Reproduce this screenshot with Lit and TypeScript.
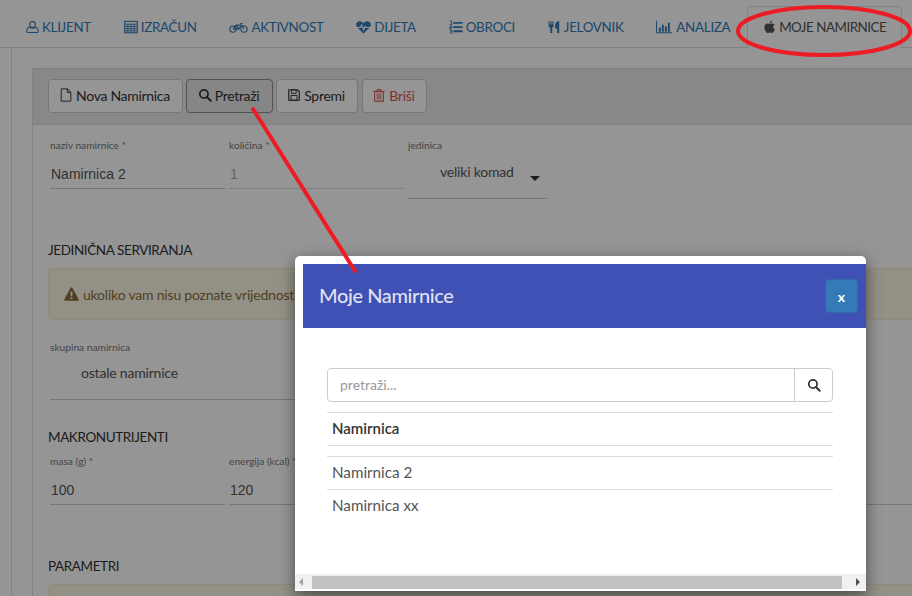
import { LitElement, css, html, svg } from 'lit';
import { customElement } from 'lit/decorators.js';

const icons: Record<string, unknown> = {
  user: svg`<circle cx="8" cy="5" r="3.6" fill="none" stroke="currentColor" stroke-width="1.3"/><path d="M2.2 14.8c-.8 0-1.2-.5-1.2-1.3 0-3 1-5 3.3-5.200 1 .8 2.300 1.200 3.700 1.200s2.700-.4 3.700-1.200c2.300.2 3.300 2.200 3.300 5.200 0 .8-.4 1.300-1.200 1.300z" fill="none" stroke="currentColor" stroke-width="1.300" stroke-linejoin="round"/>`,
  calc: svg`<rect x=".8" y="1.600" width="14.400" height="13" fill="none" stroke="currentColor" stroke-width="1.200"/><path d="M.8 4.800h14.400M.8 7.400h14.400M.8 9.900h14.400M.8 12.300h14.400M4.400 4.800v9.800M8 4.800v9.800M11.600 4.800v9.800" stroke="currentColor" stroke-width="1"/>`,
  bike: svg`<circle cx="4.200" cy="10.200" r="3.300" fill="none" stroke="currentColor" stroke-width="1.200"/><circle cx="15.800" cy="10.200" r="3.300" fill="none" stroke="currentColor" stroke-width="1.200"/><path d="M4.200 10.200 7.500 6h6l2.300 4.200M7.500 6l2.700 4.200h-6M10.200 10.200 13 5.500M12 4.300h2.300" fill="none" stroke="currentColor" stroke-width="1.200"/>`,
  heart: svg`<path d="M8 15 1.700 8.800C.6 7.700.2 6.700.2 5.400.2 3.200 1.800 1.800 4 1.800c1.600 0 3 .9 4 2.200 1-1.300 2.400-2.200 4-2.200 2.200 0 3.800 1.400 3.800 3.600 0 1.300-.4 2.300-1.500 3.400z" fill="currentColor"/><path d="M.5 8.500h4.300l1.300-2.500 2 5 1.600-3.500.8 1H15.500" fill="none" stroke="#fff" stroke-width="1.200"/>`,
  list: svg`<path d="M5 2.200h10.500v2.200H5zM5 7h10.500v2.200H5zM5 11.800h10.500V14H5z" fill="currentColor"/><path d="M1 1h2v4M.6 5h3M.8 7h2.500v1.500H.9V10h2.600M.8 11.500h2.500v3.500H.8M1.500 13.200h1.800" fill="none" stroke="currentColor" stroke-width="1"/>`,
  food: svg`<path d="M.8.800h1.300v4.200h1V.800h1.300v4.200h1V.800h1.300v6.200c0 .9-.8 1.500-1.500 1.700v6.800H2.800V8.700C1.600 8.500.8 7.900.8 7zM8.800 6c0-3 1.700-5.200 5-5.500v15h-2.500V9.800H8.800z" fill="currentColor"/>`,
  chart: svg`<path d="M.5 1.500v12.600h16.500" fill="none" stroke="currentColor" stroke-width="1.100"/><path d="M3 8.500h2v4.500H3zM6.200 5.500h2V13h-2zM9.400 7.500h2V13h-2zM12.600 3.500h2V13h-2z" fill="currentColor"/>`,
  apple: svg`<path d="M8.400 4.400c.9 0 1.900-.8 3-.8 1.200 0 2.200.6 2.800 1.500-1.100.7-1.600 1.500-1.600 2.700 0 1.400.7 2.300 2 2.900-.7 2.100-2.100 4.800-3.800 4.800-.9 0-1.400-.6-2.400-.6s-1.600.6-2.400.6C4 15.500 1.700 11.600 1.700 8.400c0-3 1.800-4.800 3.800-4.800 1.200 0 2.100.8 2.900.8zM8.200 3.600C8.100 2 9.200.5 11 .3c.1 1.700-1.100 3.200-2.800 3.300z" fill="currentColor"/>`,
  file: svg`<path d="M2.500 1h7.200l3.800 3.800V15h-11zM9.500 1v4h4" fill="none" stroke="currentColor" stroke-width="1.100"/>`,
  search: svg`<circle cx="6.800" cy="6.800" r="4.700" fill="none" stroke="currentColor" stroke-width="2"/><path d="m10.200 10.200 4.300 4.300" stroke="currentColor" stroke-width="2.300" stroke-linecap="round"/>`,
  save: svg`<path d="M2 2h10l2 2v10H2z" fill="none" stroke="currentColor" stroke-width="1.300"/><path d="M5 2.200h5.500v3.800H5zM4.500 8.500h7V14h-7z" fill="none" stroke="currentColor" stroke-width="1.100"/>`,
  trash: svg`<path d="M1.500 3.800h13M5.500 3.500 6.300 1.600h3.400l.8 1.900" fill="none" stroke="currentColor" stroke-width="1.200"/><path d="M3 4.200h10V15H3z" fill="none" stroke="currentColor" stroke-width="1.200"/><path d="M6 6v7M8 6v7M10 6v7" stroke="currentColor" stroke-width="1"/>`,
  warn: svg`<path fill-rule="evenodd" d="M8 .8c.5 0 .9.300 1.100.7l6.500 12c.4.800-.1 1.700-1 1.700H1.400c-.9 0-1.400-.9-1-1.700l6.500-12c.2-.4.600-.7 1.100-.7zM6.900 5.200l.3 5.300h1.600l.3-5.300zM7 11.500v1.900h2v-1.900z" fill="currentColor"/>`,
};

const tabs = [
  ['user', 'Klijent'],
  ['calc', 'Izračun'],
  ['bike', 'Aktivnost'],
  ['heart', 'Dijeta'],
  ['list', 'Obroci'],
  ['food', 'Jelovnik'],
  ['chart', 'Analiza'],
  ['apple', 'Moje Namirnice'],
];

@customElement('app-root')
export class AppRoot extends LitElement {
  static styles = css`
    :host {
      display: block;
      position: relative;
      width: 912px;
      height: 596px;
      overflow: hidden;
      background: #fff;
      font-family: Lato, 'Liberation Sans', sans-serif;
      font-size: 14px;
      color: #333;
    }
    .icon {
      height: 16px;
      flex: none;
    }
    .nav {
      display: flex;
      height: 48px;
      box-sizing: border-box;
      padding: 6px 0 0 10px;
      border-bottom: 1px solid #ddd;
      white-space: nowrap;
    }
    .tab {
      display: flex;
      align-items: center;
      gap: 3px;
      padding: 0 15px;
      margin-right: 0.8px;
      border: 1px solid transparent;
      color: #337ab7;
      font-size: 13.400px;
      letter-spacing: -0.3px;
      text-transform: uppercase;
    }
    .tab.active {
      margin-bottom: -1px;
      background: #fff;
      border-color: #ddd #ddd #fff;
      border-radius: 4px 4px 0 0;
      color: #555;
      letter-spacing: -0.5px;
    }
    .panel {
      margin-left: 11px;
      padding: 20px 0 0 20px;
      border-left: 1px solid #ddd;
    }
    .card {
      width: 1000px;
      border: 1px solid #ddd;
    }
    .card-head {
      display: flex;
      gap: 3px;
      height: 56px;
      box-sizing: border-box;
      padding: 10px 15px;
      background: #e9e9e9;
      border-bottom: 1px solid #ddd;
    }
    .btn {
      display: flex;
      align-items: center;
      justify-content: center;
      gap: 3px;
      height: 34px;
      box-sizing: border-box;
      padding: 0 2px 2px 0;
      border: 1px solid #ccc;
      border-radius: 4px;
      background: #fff;
      color: #333;
      letter-spacing: -0.3px;
      white-space: nowrap;
    }
    .btn.pressed {
      background: #e6e6e6;
      border-color: #8c8c8c;
    }
    .btn.danger {
      color: #d9534f;
    }
    .card-body {
      padding: 14px 15px 0;
    }
    .fields {
      display: grid;
      grid-template-columns: repeat(6, 175px);
      column-gap: 4px;
      padding-left: 2px;
    }
    .field {
      height: 64px;
    }
    .field label,
    .wide label {
      display: block;
      height: 13px;
      font-size: 10.200px;
      line-height: 13px;
      color: #777;
    }
    .value {
      height: 29px;
      margin-top: 8px;
      box-sizing: border-box;
      padding: 5px 1px 0;
      border-bottom: 1px solid #ccc;
      font-family: 'Liberation Sans', sans-serif;
      font-size: 14px;
      line-height: 18px;
      color: #555;
    }
    .value.off {
      border-bottom: 1px dotted #bbb;
      color: #aaa;
    }
    .field.select .value {
      width: 139px;
      height: 39px;
      display: flex;
      justify-content: space-between;
      padding: 3px 7px 0 32px;
      font-family: Lato, sans-serif;
      letter-spacing: -0.2px;
    }
    .caret {
      width: 0;
      height: 0;
      margin-top: 13px;
      border: 5px solid transparent;
      border-top-color: #333;
      border-bottom: 0;
    }
    h4 {
      margin: 0;
      font-size: 13.500px;
      font-weight: 400;
      letter-spacing: -0.4px;
      line-height: 18px;
      text-transform: uppercase;
    }
    .alert {
      box-sizing: border-box;
      height: 52px;
      margin-top: 9px;
      display: flex;
      align-items: center;
      gap: 4px;
      padding-left: 15px;
      border: 1px solid #faebcc;
      border-radius: 4px;
      background: #fcf8e3;
      color: #8a6d3b;
      letter-spacing: -0.2px;
    }
    .wide {
      width: 500px;
      margin: 21px 0 0 2px;
    }
    .wide div {
      height: 41px;
      margin-top: 5px;
      padding: 5px 0 0 31px;
      box-sizing: border-box;
      border-bottom: 1px solid #ccc;
      color: #555;
      letter-spacing: -0.2px;
      line-height: 18px;
    }
    .backdrop {
      position: absolute;
      inset: 0;
      background: rgba(0, 0, 0, 0.415);
    }
    .modal {
      position: absolute;
      left: 295px;
      top: 256px;
      width: 571px;
      height: 335px;
      box-sizing: border-box;
      padding: 8px 0 2px 8px;
      display: flex;
      flex-direction: column;
      background: #fff;
      border-radius: 5px 5px 0 0;
      box-shadow: 0 5px 15px rgba(0, 0, 0, 0.5);
    }
    .modal-head {
      height: 64px;
      flex: none;
      display: flex;
      align-items: center;
      justify-content: space-between;
      padding: 0 8px 0 16px;
      background: #3f51b5;
      color: rgba(255, 255, 255, 0.85);
      font-size: 20px;
      font-weight: 500;
      letter-spacing: -0.4px;
    }
    .modal-head span {
      margin-top: -2px;
    }
    .close {
      width: 33px;
      height: 34px;
      box-sizing: border-box;
      display: flex;
      align-items: center;
      justify-content: center;
      border: 1px solid #2e6da4;
      border-radius: 4px;
      background: #337ab7;
      color: #fff;
      font-size: 14px;
      font-weight: 700;
      letter-spacing: 0;
    }
    .modal-body {
      flex: 1;
      padding: 40px 33px 0 24px;
    }
    .search {
      display: flex;
      height: 34px;
      box-sizing: border-box;
      border: 1px solid #ccc;
      border-radius: 4px;
    }
    .search span {
      flex: 1;
      padding-left: 12px;
      line-height: 32px;
      color: #999;
    }
    .search div {
      width: 38px;
      box-sizing: border-box;
      display: flex;
      align-items: center;
      justify-content: center;
      border-left: 1px solid #ccc;
    }
    .row {
      box-sizing: border-box;
      height: 33px;
      padding: 0 5px;
      border-top: 1px solid #ddd;
      font-size: 15.200px;
      line-height: 30px;
      color: #555;
    }
    .row.title {
      margin-top: 10px;
      font-size: 15px;
      font-weight: 600;
      color: #333;
    }
    .row.spacer {
      height: 11px;
    }
    .scrollbar {
      flex: none;
      display: flex;
      align-items: flex-end;
      height: 15px;
      margin-left: -8px;
      background: #f1f1f1;
    }
    .scrollbar i {
      width: 0;
      height: 0;
      margin-bottom: 3px;
      border: 4px solid transparent;
    }
    .scrollbar i.left {
      margin-left: 4px;
      border-left: 0;
      border-right: 4px solid #a3a3a3;
    }
    .scrollbar i.right {
      margin-left: 14px;
      border-right: 0;
      border-left: 4px solid #505050;
    }
    .thumb {
      width: 530px;
      height: 13px;
      margin-left: 9px;
      background: #c1c1c1;
    }
    .marks {
      position: absolute;
      inset: 0;
      pointer-events: none;
    }
  `;

  private icon(name: string, width = 16) {
    return html`<svg class="icon" width=${width} viewBox="0 0 ${name === 'bike' ? 20 : name === 'chart' ? 18 : 16} 16" aria-hidden="true">${icons[name]}</svg>`;
  }

  private field(label: string, value: string, off = false) {
    return html`<div class="field">
      <label>${label}</label>
      <div class="value ${off ? 'off' : ''}">${value}</div>
    </div>`;
  }

  render() {
    const iconWidth: Record<string, number> = { user: 13, calc: 14, bike: 19, heart: 15, list: 14, food: 13, chart: 17, apple: 13 };
    return html`
      <nav class="nav">
        ${tabs.map(([name, label], i) => html`
          <div class="tab ${i === tabs.length - 1 ? 'active' : ''}">
            ${this.icon(name, iconWidth[name])}<span>${label}</span>
          </div>
        `)}
      </nav>
      <div class="panel">
        <div class="card">
          <div class="card-head">
            <div class="btn" style="width:135px">${this.icon('file', 14)}Nova Namirnica</div>
            <div class="btn pressed" style="width:87px">${this.icon('search', 14)}Pretraži</div>
            <div class="btn" style="width:82px">${this.icon('save', 14)}Spremi</div>
            <div class="btn danger" style="width:65px;margin-left:1px">${this.icon('trash', 14)}Briši</div>
          </div>
          <div class="card-body">
            <div class="fields">
              ${this.field('naziv namirnice *', 'Namirnica 2')}
              ${this.field('količina *', '1', true)}
              <div class="field select">
                <label>jedinica</label>
                <div class="value"><span>veliki komad</span><i class="caret"></i></div>
              </div>
            </div>
            <h4 style="margin-top:38px">Jedinična serviranja</h4>
            <div class="alert">${this.icon('warn', 15)}ukoliko vam nisu poznate vrijednosti</div>
            <div class="wide">
              <label>skupina namirnica</label>
              <div>ostale namirnice</div>
            </div>
            <h4 style="margin-top:28px">Makronutrijenti</h4>
            <div class="fields" style="margin-top:9px">
              ${this.field('masa (g) *', '100')}
              ${this.field('energija (kcal) *', '120')}
              ${this.field('', '')}
              ${this.field('', '')}
              ${this.field('', '')}
            </div>
            <h4 style="margin-top:38px">Parametri</h4>
            <div class="alert"></div>
          </div>
        </div>
      </div>
      <div class="backdrop"></div>
      <div class="modal">
        <div class="modal-head">
          <span>Moje Namirnice</span>
          <div class="close">x</div>
        </div>
        <div class="modal-body">
          <div class="search">
            <span>pretraži...</span>
            <div>${this.icon('search', 14)}</div>
          </div>
          <div class="row title">Namirnica</div>
          <div class="row spacer"></div>
          <div class="row">Namirnica 2</div>
          <div class="row">Namirnica xx</div>
        </div>
        <div class="scrollbar">
          <i class="left"></i>
          <div class="thumb"></div>
          <i class="right"></i>
        </div>
      </div>
      <svg class="marks" width="912" height="596">
        <path d="M253 109 355 271" stroke="#ed1c24" stroke-width="4" stroke-linecap="round"/>
        <ellipse cx="824" cy="31" rx="86" ry="24" fill="none" stroke="#ed1c24" stroke-width="4"/>
      </svg>
    `;
  }
}
